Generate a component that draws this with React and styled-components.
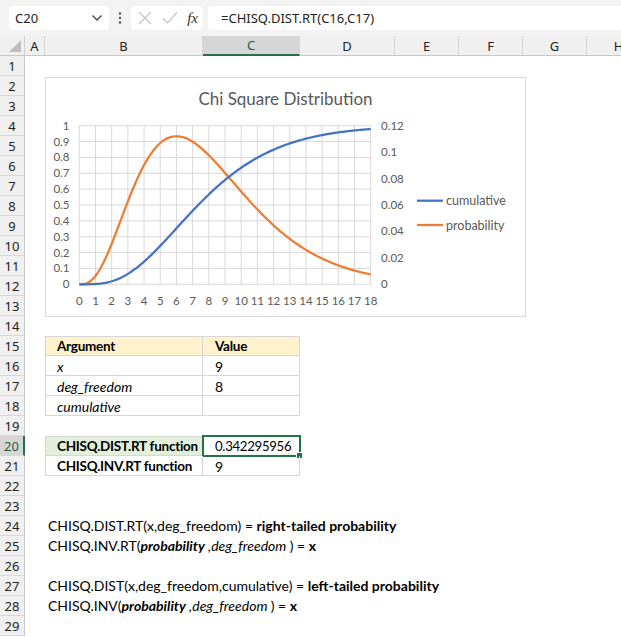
import React from 'react'
import styled, { createGlobalStyle } from 'styled-components'

const GlobalStyle = createGlobalStyle`
  html, body { margin: 0; padding: 0; background: #fff; overflow: hidden; }
  body { font-family: Lato, "Open Sans", sans-serif; }
`

const COLS = [
	{ key: 'A', w: 20 },
	{ key: 'B', w: 158 },
	{ key: 'C', w: 97 },
	{ key: 'D', w: 95 },
	{ key: 'E', w: 64 },
	{ key: 'F', w: 64 },
	{ key: 'G', w: 64 },
	{ key: 'H', w: 64 },
]
const gridCols = `25px ${COLS.map(c => c.w + 'px').join(' ')}`
const ROWS = Array.from({ length: 29 }, (_, i) => i + 1)

const TABLE = {
	15: { top: true, cells: [{ t: 'Argument', bold: true, fill: '#fff2cc' }, { t: 'Value', bold: true, fill: '#fff2cc' }] },
	16: { cells: [{ t: 'x', italic: true }, { t: '9' }] },
	17: { cells: [{ t: 'deg_freedom', italic: true }, { t: '8' }] },
	18: { cells: [{ t: 'cumulative', italic: true }, { t: '' }] },
	20: {
		top: true,
		cells: [
			{ t: 'CHISQ.DIST.RT function', bold: true, fill: '#e2efda' },
			{ t: '0.342295956', selected: true, tight: true },
		],
	},
	21: { cells: [{ t: 'CHISQ.INV.RT function', bold: true }, { t: '9' }] },
}

const NOTES = {
	24: (
		<span>
			{'CHISQ.DIST.RT(x,deg_freedom) = '}
			<b>right-tailed probability</b>
		</span>
	),
	25: (
		<span>
			{'CHISQ.INV.RT('}
			<b><i>probability</i></b>
			<i>{' ,deg_freedom '}</i>
			{') = '}
			<b>x</b>
		</span>
	),
	27: (
		<span>
			{'CHISQ.DIST(x,deg_freedom,cumulative) = '}
			<b>left-tailed probability</b>
		</span>
	),
	28: (
		<span>
			{'CHISQ.INV('}
			<b><i>probability</i></b>
			<i>{' ,deg_freedom '}</i>
			{') = '}
			<b>x</b>
		</span>
	),
}

// chart geometry (relative to chart frame)
const PX0 = 34.3
const PX1 = 325.7
const PY0 = 48.7
const PY1 = 207.3
const px = x => PX0 + (x * (PX1 - PX0)) / 18
const pyL = v => PY1 - v * (PY1 - PY0)
const pyR = v => PY1 - (v / 0.12) * (PY1 - PY0)

const cdf = x => 1 - Math.exp(-x / 2) * (1 + x / 2 + (x / 2) ** 2 / 2 + (x / 2) ** 3 / 6)
const pdf = x => (x ** 3 * Math.exp(-x / 2)) / 96

const buildPath = (fn, py) => {
	let d = ''
	for (let i = 0; i <= 180; i++) {
		const x = i / 10
		d += `${i === 0 ? 'M' : 'L'}${px(x).toFixed(2)},${py(fn(x)).toFixed(2)} `
	}
	return d
}

export default function App() {
	return (
		<Page>
			<GlobalStyle />
			<Toolbar>
				<NameBox>
					<span>C20</span>
					<svg width='12' height='8' viewBox='0 0 12 8'>
						<path d='M1.5 1.5 L6 6 L10.5 1.5' fill='none' stroke='#444' strokeWidth='1.3' />
					</svg>
				</NameBox>
				<Dots>
					<svg width='4' height='14' viewBox='0 0 4 14'>
						<circle cx='2' cy='2.5' r='1.2' fill='#555' />
						<circle cx='2' cy='7' r='1.2' fill='#555' />
						<circle cx='2' cy='11.5' r='1.2' fill='#555' />
					</svg>
				</Dots>
				<FuncBox>
					<svg width='14' height='14' viewBox='0 0 14 14'>
						<path d='M1 1 L13 13 M13 1 L1 13' stroke='#c4c4c4' strokeWidth='1.2' />
					</svg>
					<svg width='16' height='14' viewBox='0 0 16 14'>
						<path d='M1 7.5 L5.5 12 L15 1.5' fill='none' stroke='#c4c4c4' strokeWidth='1.2' />
					</svg>
					<Fx>fx</Fx>
				</FuncBox>
				<FormulaBox>=CHISQ.DIST.RT(C16,C17)</FormulaBox>
			</Toolbar>

			<HeaderRow>
				<Corner>
					<svg width='12' height='12' viewBox='0 0 12 12'>
						<path d='M12 0 L12 12 L0 12 Z' fill='#bdbdbd' />
					</svg>
				</Corner>
				{COLS.map(c => (
					<ColHead key={c.key} $active={c.key === 'C'}>
						{c.key}
					</ColHead>
				))}
			</HeaderRow>

			<Sheet>
				{ROWS.map(r => {
					const tr = TABLE[r]
					return (
						<React.Fragment key={r}>
							<RowHead $active={r === 20}>{r}</RowHead>
							{COLS.map(c => {
								if (tr && (c.key === 'B' || c.key === 'C')) {
									const cell = tr.cells[c.key === 'B' ? 0 : 1]
									return (
										<TableCell
											key={c.key}
											$fill={cell.fill}
											$bold={cell.bold}
											$italic={cell.italic}
											$tight={cell.tight}
											$left={c.key === 'B'}
											$top={tr.top}
										>
											{cell.t}
											{cell.selected && (
												<Selection>
													<Handle />
												</Selection>
											)}
										</TableCell>
									)
								}
								if (c.key === 'B' && NOTES[r]) {
									return <NoteCell key={c.key}>{NOTES[r]}</NoteCell>
								}
								return <Cell key={c.key} />
							})}
						</React.Fragment>
					)
				})}

				<ChartFrame>
					<svg width='481' height='240' viewBox='0 0 481 240'>
						<ChartTitle x='240.5' y='27.5' textAnchor='middle'>
							Chi Square Distribution
						</ChartTitle>
						{Array.from({ length: 11 }, (_, i) => (
							<line key={'h' + i} x1={PX0} x2={PX1} y1={pyL(i / 10)} y2={pyL(i / 10)} stroke='#d9d9d9' strokeWidth='1' />
						))}
						{Array.from({ length: 19 }, (_, i) => (
							<line key={'v' + i} x1={px(i)} x2={px(i)} y1={PY0} y2={PY1} stroke='#d9d9d9' strokeWidth='1' />
						))}
						{Array.from({ length: 11 }, (_, i) => (
							<AxisLabel key={'l' + i} x='24.5' y={pyL(i / 10) + 4} textAnchor='end'>
								{i === 10 ? '1' : i === 0 ? '0' : (i / 10).toString()}
							</AxisLabel>
						))}
						{['0', '0.02', '0.04', '0.06', '0.08', '0.1', '0.12'].map((t, i) => (
							<AxisLabel key={'r' + i} x='336' y={pyR(i * 0.02) + 4}>
								{t}
							</AxisLabel>
						))}
						{Array.from({ length: 19 }, (_, i) => (
							<AxisLabel key={'x' + i} x={px(i)} y='227.5' textAnchor='middle'>
								{i}
							</AxisLabel>
						))}
						<path d={buildPath(pdf, pyR)} fill='none' stroke='#ed7d31' strokeWidth='2.25' strokeLinejoin='round' />
						<path d={buildPath(cdf, pyL)} fill='none' stroke='#4472c4' strokeWidth='2.25' strokeLinejoin='round' />
						<line x1='372' x2='398' y1='123.7' y2='123.7' stroke='#4472c4' strokeWidth='2.25' />
						<LegendText x='401' y='128.2'>cumulative</LegendText>
						<line x1='372' x2='398' y1='148' y2='148' stroke='#ed7d31' strokeWidth='2.25' />
						<LegendText x='401' y='152.5'>probability</LegendText>
					</svg>
				</ChartFrame>
			</Sheet>
		</Page>
	)
}

const Page = styled.div`
	width: 621px;
	height: 637px;
	overflow: hidden;
	background: #fff;
`

const Toolbar = styled.div`
	height: 36px;
	display: flex;
	align-items: center;
	background: #f3f3f3;
	font-family: 'Noto Sans', 'Open Sans', sans-serif;
	font-size: 13px;
	color: #222;
`

const NameBox = styled.div`
	box-sizing: border-box;
	margin-left: 9px;
	width: 100px;
	height: 24px;
	background: #fff;
	border-radius: 4px;
	display: flex;
	align-items: center;
	justify-content: space-between;
	padding: 0 6px 0 6px;
`

const Dots = styled.div`
	width: 22px;
	display: flex;
	justify-content: center;
`

const FuncBox = styled.div`
	box-sizing: border-box;
	width: 72px;
	height: 24px;
	background: #fff;
	border-radius: 4px;
	display: flex;
	align-items: center;
	justify-content: space-between;
	padding: 0 5px 0 7px;
`

const Fx = styled.span`
	font-family: 'Liberation Serif', serif;
	font-style: italic;
	font-size: 15px;
	color: #333;
`

const FormulaBox = styled.div`
	box-sizing: border-box;
	margin-left: 5px;
	flex: 1;
	height: 24px;
	background: #fff;
	border-radius: 4px 0 0 4px;
	display: flex;
	align-items: center;
	padding-left: 13px;
`

const HeaderRow = styled.div`
	display: grid;
	grid-template-columns: ${gridCols};
	height: 20px;
	background: #f0f0f0;
	font-family: 'Noto Sans', 'Open Sans', sans-serif;
	font-size: 13px;
	color: #222;
`

const Corner = styled.div`
	display: flex;
	align-items: flex-end;
	justify-content: flex-end;
	padding: 0 3px 3px 0;
	border-right: 1px solid #d0d0d0;
	border-bottom: 1px solid #c8c8c8;
`

const ColHead = styled.div`
	box-sizing: border-box;
	display: flex;
	align-items: center;
	justify-content: center;
	border-right: 1px solid #d4d4d4;
	border-bottom: ${p => (p.$active ? '2px solid #217346' : '1px solid #c8c8c8')};
	background: ${p => (p.$active ? '#d6d6d6' : 'transparent')};
	color: ${p => (p.$active ? '#1e5e3b' : '#222')};
`

const Sheet = styled.div`
	position: relative;
	display: grid;
	grid-template-columns: ${gridCols};
	grid-auto-rows: 20px;
	font-size: 14px;
	color: #000;
`

const RowHead = styled.div`
	box-sizing: border-box;
	display: flex;
	align-items: center;
	justify-content: center;
	background: ${p => (p.$active ? '#d6d6d6' : '#f0f0f0')};
	border-right: ${p => (p.$active ? '2px solid #217346' : '1px solid #c8c8c8')};
	border-bottom: 1px solid #d8d8d8;
	font-family: 'Noto Sans', 'Open Sans', sans-serif;
	font-size: 13px;
	color: ${p => (p.$active ? '#1e5e3b' : '#222')};
`

const Cell = styled.div``

const TableCell = styled.div`
	position: relative;
	display: flex;
	align-items: center;
	padding-left: 12px;
	background: ${p => p.$fill || 'transparent'};
	font-weight: ${p => (p.$bold ? 700 : 400)};
	font-style: ${p => (p.$italic ? 'italic' : 'normal')};
	font-size: ${p => (p.$bold ? '13.5px' : p.$tight ? '13.2px' : '14px')};
	letter-spacing: ${p => (p.$bold ? '-0.25px' : p.$tight ? '-0.3px' : 'normal')};
	white-space: nowrap;
	box-shadow: inset -1px -1px 0 #d6d6d6 ${p => (p.$left ? ', inset 1px 0 0 #d6d6d6' : '')}
		${p => (p.$top ? ', inset 0 1px 0 #d6d6d6' : '')};
`

const Selection = styled.div`
	position: absolute;
	left: -1px;
	top: -1px;
	right: -1px;
	bottom: -1px;
	border: 2px solid #217346;
	pointer-events: none;
`

const Handle = styled.div`
	position: absolute;
	right: -4px;
	bottom: -4px;
	width: 5px;
	height: 5px;
	background: #217346;
	border: 1px solid #fff;
`

const NoteCell = styled.div`
	line-height: 20px;
	padding-left: 3px;
	white-space: nowrap;
	overflow: visible;
	position: relative;
	z-index: 1;
`

const ChartFrame = styled.div`
	position: absolute;
	left: 45px;
	top: 21px;
	width: 481px;
	height: 240px;
	box-sizing: border-box;
	background: #fff;
	border: 1px solid #d9d9d9;
	overflow: hidden;

	svg {
		position: absolute;
		left: -1px;
		top: -1px;
	}
`

const ChartTitle = styled.text`
	font-family: Lato, 'Open Sans', sans-serif;
	font-size: 17px;
	fill: #595959;
`

const AxisLabel = styled.text`
	font-family: Lato, 'Open Sans', sans-serif;
	font-size: 11.5px;
	fill: #595959;
`

const LegendText = styled.text`
	font-family: Lato, 'Open Sans', sans-serif;
	font-size: 12.5px;
	fill: #595959;
`
